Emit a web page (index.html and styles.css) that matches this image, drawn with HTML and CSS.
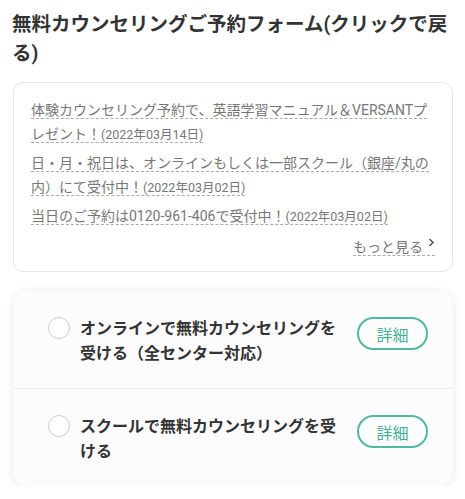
FILE: index.html
```html
<!DOCTYPE html>
<html lang="ja">
<head>
<meta charset="utf-8">
<link rel="stylesheet" href="styles.css">
</head>
<body>
<div class="page">
  <h1 class="title">無料カウンセリングご予約フォーム(クリックで戻る)</h1>

  <div class="news">
    <p class="news-item"><a class="news-link">体験カウンセリング予約で、英語学習マニュアル＆VERSANTプレゼント！<span class="date">(2022年03月14日)</span></a></p>
    <p class="news-item"><a class="news-link">日・月・祝日は、オンラインもしくは一部スクール（銀座/丸の内）にて受付中！<span class="date">(2022年03月02日)</span></a></p>
    <p class="news-item"><a class="news-link">当日のご予約は0120-961-406で受付中！<span class="date">(2022年03月02日)</span></a></p>
    <div class="more"><a class="more-link">もっと見る<svg class="chev" width="7" height="10" viewBox="0 0 7 10"><path d="M1.5 1 L5 4.5 L1.5 8" fill="none" stroke="#555" stroke-width="1.6"/></svg></a></div>
  </div>

  <div class="options">
    <div class="option option-first">
      <span class="radio"></span>
      <span class="option-text">オンラインで無料カウンセリングを受ける（全センター対応）</span>
      <span class="detail">詳細</span>
    </div>
    <div class="option">
      <span class="radio"></span>
      <span class="option-text">スクールで無料カウンセリングを受ける</span>
      <span class="detail">詳細</span>
    </div>
  </div>
</div>
</body>
</html>
```

FILE: styles.css
```css
html, body {
  margin: 0;
  padding: 0;
  background: #ffffff;
}

.page {
  padding: 0 12px 0 13px;
  font-family: Roboto, "Noto Sans CJK JP", sans-serif;
}

.title {
  margin: 10px 0 14px -1px;
  font-size: 19.5px;
  line-height: 29px;
  font-weight: 700;
  color: #333333;
}

.news {
  border: 1px solid #e6e6e6;
  border-radius: 10px;
  padding: 15px 17px 12px;
}

.news-item {
  margin: 0 0 4px;
  font-size: 14px;
  line-height: 24px;
  color: #777777;
}

.news-link {
  border-bottom: 1px dashed #aaaaaa;
}

.date {
  font-size: 12.5px;
}

.more {
  text-align: right;
  font-size: 14px;
  line-height: 24px;
  color: #777777;
  margin-top: 6px;
}

.more-link {
  border-bottom: 1px dashed #aaaaaa;
}

.chev {
  margin-left: 5px;
  vertical-align: 4px;
}

.options {
  margin-top: 19px;
  background: #fcfcfc;
  border-radius: 14px;
  box-shadow: 0 1px 8px rgba(0, 0, 0, 0.1);
}

.option {
  display: flex;
  align-items: flex-start;
  padding: 25px 25px 22px 35px;
}

.option-first {
  border-bottom: 1px solid #ebebeb;
}

.radio {
  flex-shrink: 0;
  width: 22px;
  height: 22px;
  box-sizing: border-box;
  border: 1px solid #cccccc;
  border-radius: 50%;
  background: #ffffff;
  margin-top: 1px;
}

.option-text {
  margin-left: 10px;
  width: 262px;
  font-size: 16px;
  line-height: 25px;
  font-weight: 700;
  color: #333333;
}

.detail {
  margin-left: auto;
  margin-top: 1px;
  flex-shrink: 0;
  width: 71px;
  height: 33px;
  box-sizing: border-box;
  border: 2px solid #4fb9a2;
  border-radius: 17px;
  display: flex;
  align-items: center;
  justify-content: center;
  font-size: 16px;
  color: #4aae99;
}
```
